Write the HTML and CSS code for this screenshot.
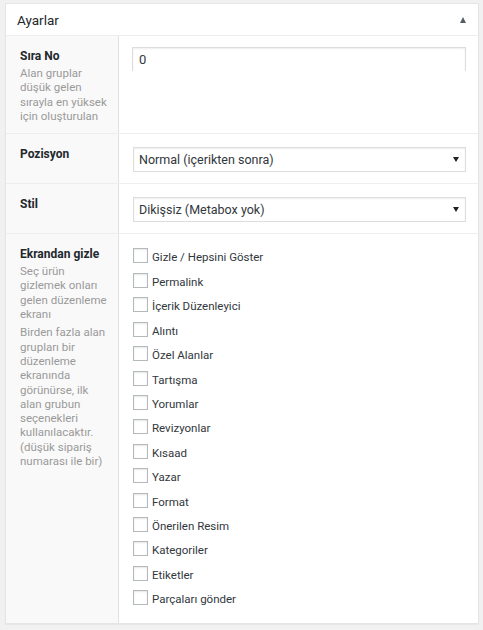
FILE: index.html
```html
<!DOCTYPE html>
<html lang="tr">
<head>
    <meta charset="UTF-8">
    <meta name="viewport" content="width=device-width, initial-scale=1.0">
    <title>Ayarlar</title>
    <link rel="stylesheet" href="styles.css">
</head>
<body>
    <div class="postbox">
        <div class="hndle">
            <span>Ayarlar</span>
            <span class="toggle"></span>
        </div>

        <div class="inside">
            <!-- Sıra No -->
            <div class="field">
                <div class="field-label">
                    <label>Sıra No</label>
                    <p class="desc">Alan gruplar düşük gelen sırayla en yüksek için oluşturulan</p>
                </div>
                <div class="field-input">
                    <input type="text" class="text-input" value="0">
                </div>
            </div>

            <!-- Pozisyon -->
            <div class="field">
                <div class="field-label">
                    <label>Pozisyon</label>
                </div>
                <div class="field-input">
                    <div class="select-wrap">
                        <select>
                            <option>Normal (içerikten sonra)</option>
                            <option>Yüksek (başlıktan sonra)</option>
                            <option>Yan</option>
                        </select>
                    </div>
                </div>
            </div>

            <!-- Stil -->
            <div class="field">
                <div class="field-label">
                    <label>Stil</label>
                </div>
                <div class="field-input">
                    <div class="select-wrap">
                        <select>
                            <option>Dikişsiz (Metabox yok)</option>
                            <option>Standart (WP metabox)</option>
                        </select>
                    </div>
                </div>
            </div>

            <!-- Ekrandan gizle -->
            <div class="field">
                <div class="field-label">
                    <label>Ekrandan gizle</label>
                    <p class="desc">Seç ürün gizlemek onları gelen düzenleme ekranı</p>
                    <p class="desc">Birden fazla alan grupları bir düzenleme ekranında görünürse, ilk alan grubun seçenekleri kullanılacaktır. (düşük sipariş numarası ile bir)</p>
                </div>
                <div class="field-input list-input">
                    <ul class="checkbox-list">
                        <li><label><input type="checkbox"> Gizle / Hepsini Göster</label></li>
                        <li><label><input type="checkbox"> Permalink</label></li>
                        <li><label><input type="checkbox"> İçerik Düzenleyici</label></li>
                        <li><label><input type="checkbox"> Alıntı</label></li>
                        <li><label><input type="checkbox"> Özel Alanlar</label></li>
                        <li><label><input type="checkbox"> Tartışma</label></li>
                        <li><label><input type="checkbox"> Yorumlar</label></li>
                        <li><label><input type="checkbox"> Revizyonlar</label></li>
                        <li><label><input type="checkbox"> Kısaad</label></li>
                        <li><label><input type="checkbox"> Yazar</label></li>
                        <li><label><input type="checkbox"> Format</label></li>
                        <li><label><input type="checkbox"> Önerilen Resim</label></li>
                        <li><label><input type="checkbox"> Kategoriler</label></li>
                        <li><label><input type="checkbox"> Etiketler</label></li>
                        <li><label><input type="checkbox"> Parçaları gönder</label></li>
                    </ul>
                </div>
            </div>
        </div>
    </div>
</body>
</html>
```

FILE: styles.css
```css
body{
    margin: 0;
    padding: 3px 4px 6px 5px;
    background: #f1f1f1;
    font-family: Roboto, "Open Sans", sans-serif;
    color: #32373c;
}
.postbox{
    background: #fff;
    border: 1px solid #e5e5e5;
    box-shadow: 0 1px 1px rgba(0,0,0,.04);
}
.hndle{
    height: 31px;
    display: flex;
    align-items: center;
    justify-content: space-between;
    padding: 0 12px 0 11px;
    border-bottom: 1px solid #eee;
    font-size: 13.5px;
    color: #23282d;
}
/* small up arrow on the right of the header */
.toggle{
    width: 0;
    height: 0;
    border-left: 3.5px solid transparent;
    border-right: 3.5px solid transparent;
    border-bottom: 6px solid #555d66;
    margin-top: 1px;
}
.field{
    display: flex;
    border-top: 1px solid #eee;
}
.field:first-child{
    border-top: none;
}
.field-label{
    width: 90px;
    flex-shrink: 0;
    padding: 10px 8px 10px 14px;
    background: #f9f9f9;
    border-right: 1px solid #e1e1e1;
}
.field-label label{
    display: block;
    font-size: 12px;
    font-weight: 700;
    line-height: 20px;
    color: #23282d;
}
.desc{
    margin: 0;
    font-size: 11.5px;
    line-height: 14.3px;
    color: #999;
}
.desc + .desc{
    margin-top: 4px;
}
.field-input{
    flex: 1;
    padding: 13px 12px 11px 13px;
}
.field:first-child .field-input{
    padding-top: 11px;
}
.field-input.list-input{
    padding-top: 11px;
}
.text-input{
    box-sizing: border-box;
    width: 100%;
    height: 24px;
    margin: 0;
    padding: 0 6px;
    border: 1px solid #ddd;
    border-bottom: 0;
    box-shadow: inset 0 1px 2px rgba(0,0,0,.07);
    font-family: inherit;
    font-size: 13px;
    color: #32373c;
    outline: none;
}
.select-wrap{
    position: relative;
    margin-left: 1px;
}
.select-wrap select{
    box-sizing: border-box;
    width: 100%;
    height: 25px;
    margin: 0;
    padding: 0 24px 0 5px;
    border: 1px solid #ddd;
    border-radius: 0;
    background: #fff;
    box-shadow: inset 0 1px 2px rgba(0,0,0,.07);
    -webkit-appearance: none;
    appearance: none;
    font-family: inherit;
    font-size: 12.5px;
    color: #32373c;
}
/* dropdown arrow drawn over the select */
.select-wrap::after{
    content: "";
    position: absolute;
    right: 7px;
    top: 10px;
    border-left: 3.5px solid transparent;
    border-right: 3.5px solid transparent;
    border-top: 5px solid #222;
    pointer-events: none;
}
.checkbox-list{
    list-style: none;
    margin: 0;
    padding: 0;
}
.checkbox-list li{
    height: 24.43px;
    font-size: 11.5px;
    color: #32373c;
}
.checkbox-list label{
    display: flex;
    align-items: center;
    height: 100%;
}
.checkbox-list input{
    -webkit-appearance: none;
    appearance: none;
    box-sizing: border-box;
    width: 15px;
    height: 15px;
    margin: -3px 4px 0 1px;
    border: 1px solid #b4b9be;
    background: #fff;
    box-shadow: inset 0 1px 2px rgba(0,0,0,.1);
}
```
